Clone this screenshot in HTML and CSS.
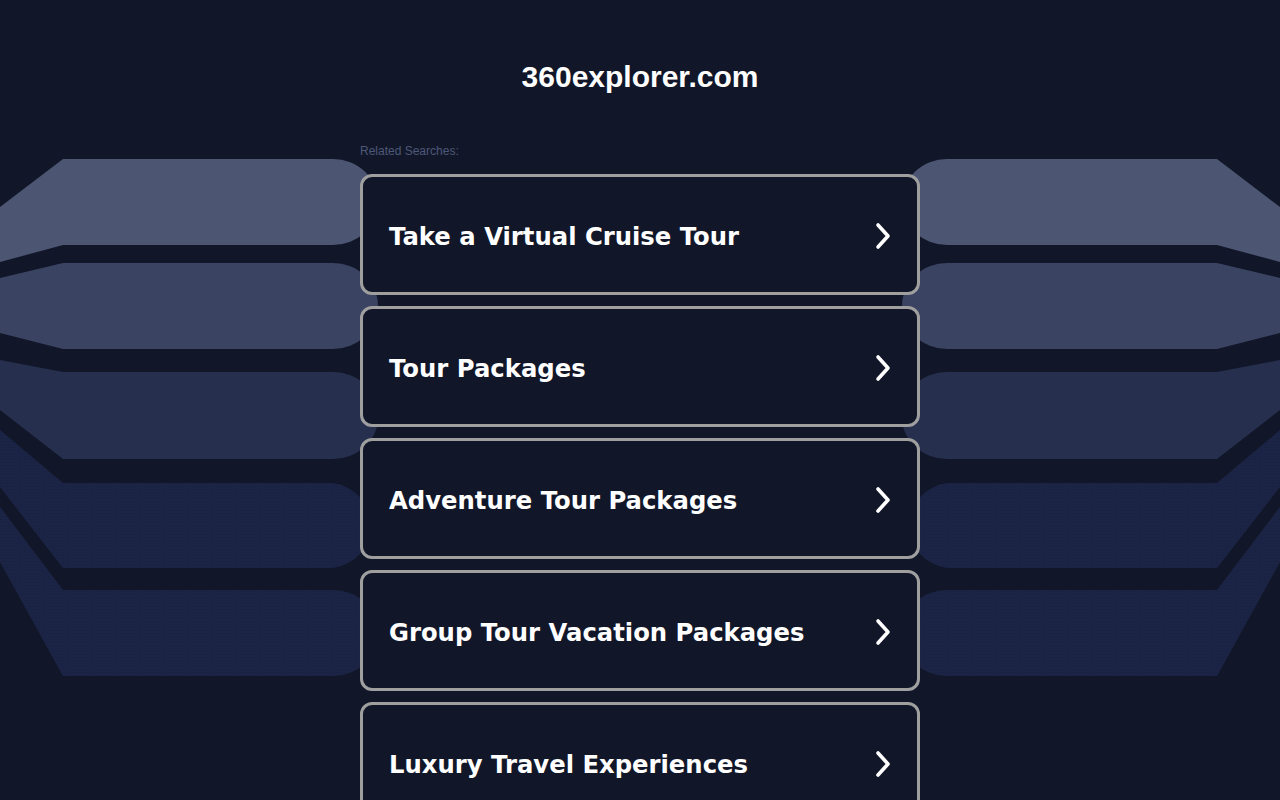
FILE: index.html
```html
<!DOCTYPE html>
<html lang="en">
<head>
    <meta charset="UTF-8">
    <title>360explorer.com</title>
    <link rel="stylesheet" href="styles.css">
</head>
<body>

<!-- decorative bands behind the list -->
<svg class="bg" viewBox="0 0 1280 800" preserveAspectRatio="none" aria-hidden="true">
    <defs>
        <pattern id="dots" width="3" height="3" patternUnits="userSpaceOnUse">
            <rect width="3" height="3" fill="#1b2445"/>
            <rect width="1" height="1" fill="#172040"/>
        </pattern>
        <g id="bands">
            <path d="M0,207 L63,159 H333 A45,43 0 0 1 333,245 H63 L0,262 Z" fill="#4c5673"/>
            <path d="M0,278 L63,263 H333 A45,43 0 0 1 333,349 H63 L0,333 Z" fill="#3a4361"/>
            <path d="M0,360 L63,372 H333 A45,43 0 0 1 333,459 H63 L0,410 Z" fill="#262f4d"/>
            <path d="M0,430 L63,483 H333 A45,43 0 0 1 333,568 H63 L0,487 Z" fill="url(#dots)"/>
            <path d="M0,507 L63,590 H333 A45,43 0 0 1 333,676 H63 L0,562 Z" fill="url(#dots)"/>
        </g>
    </defs>
    <use href="#bands"/>
    <use href="#bands" transform="translate(1280,0) scale(-1,1)"/>
</svg>

<div class="page">
    <h1 class="domain">360explorer.com</h1>

    <div class="related">
        <p class="related-title">Related Searches:</p>
        <ul class="links">
            <li><a href="#">Take a Virtual Cruise Tour <span class="arrow"><svg viewBox="0 0 20 30"><path d="M5 4 L15 15 L5 26"/></svg></span></a></li>
            <li><a href="#">Tour Packages <span class="arrow"><svg viewBox="0 0 20 30"><path d="M5 4 L15 15 L5 26"/></svg></span></a></li>
            <li><a href="#">Adventure Tour Packages <span class="arrow"><svg viewBox="0 0 20 30"><path d="M5 4 L15 15 L5 26"/></svg></span></a></li>
            <li><a href="#">Group Tour Vacation Packages <span class="arrow"><svg viewBox="0 0 20 30"><path d="M5 4 L15 15 L5 26"/></svg></span></a></li>
            <li><a href="#">Luxury Travel Experiences <span class="arrow"><svg viewBox="0 0 20 30"><path d="M5 4 L15 15 L5 26"/></svg></span></a></li>
        </ul>
    </div>
</div>

</body>
</html>
```

FILE: styles.css
```css
* {
    padding: 0;
    margin: 0;
    box-sizing: border-box;
    list-style: none;
}

html, body {
    height: 100%;
    overflow: hidden;
}

body {
    background: #111729;
    font-family: "Liberation Sans", Arial, sans-serif;
    color: #fff;
}

.bg {
    position: absolute;
    left: 0;
    top: 0;
    width: 1280px;
    height: 800px;
    z-index: 0;
}

.page {
    position: relative;
    z-index: 1;
    width: 560px;
    margin: 0 auto;
    padding-top: 59px;
}

.domain {
    font-size: 30px;
    font-weight: bold;
    text-align: center;
    line-height: 36px;
    color: #fff;
}

.related {
    margin-top: 49px;
}

.related-title {
    font-size: 12px;
    color: #4e5878;
    line-height: 14px;
    margin-bottom: 16px;
}

.links {
    display: flex;
    flex-direction: column;
    gap: 11px;
}

.links a {
    display: flex;
    align-items: center;
    justify-content: space-between;
    height: 121px;
    padding: 3px 24px 0 26px;
    background: #111729;
    border: 3px solid #9f9f9f;
    border-radius: 12px;
    font-family: "DejaVu Sans", Verdana, sans-serif;
    font-size: 24.3px;
    font-weight: bold;
    color: #fff;
    text-decoration: none;
}

.arrow svg {
    display: block;
    width: 20px;
    height: 30px;
    fill: none;
    stroke: #fff;
    stroke-width: 3.6;
    stroke-linecap: round;
    stroke-linejoin: round;
}
```
